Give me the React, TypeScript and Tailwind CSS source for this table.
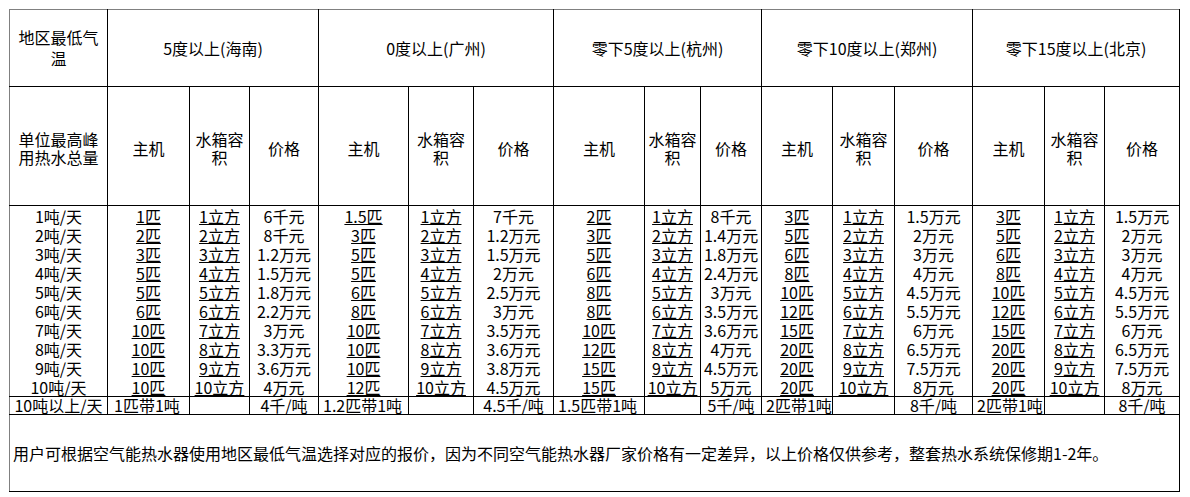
import React from "react";

const rows: string[][] = [
  ["1吨/天", "1匹", "1立方", "6千元", "1.5匹", "1立方", "7千元", "2匹", "1立方", "8千元", "3匹", "1立方", "1.5万元", "3匹", "1立方", "1.5万元"],
  ["2吨/天", "2匹", "2立方", "8千元", "3匹", "2立方", "1.2万元", "3匹", "2立方", "1.4万元", "5匹", "2立方", "2万元", "5匹", "2立方", "2万元"],
  ["3吨/天", "3匹", "3立方", "1.2万元", "5匹", "3立方", "1.5万元", "5匹", "3立方", "1.8万元", "6匹", "3立方", "3万元", "6匹", "3立方", "3万元"],
  ["4吨/天", "5匹", "4立方", "1.5万元", "5匹", "4立方", "2万元", "6匹", "4立方", "2.4万元", "8匹", "4立方", "4万元", "8匹", "4立方", "4万元"],
  ["5吨/天", "5匹", "5立方", "1.8万元", "6匹", "5立方", "2.5万元", "8匹", "5立方", "3万元", "10匹", "5立方", "4.5万元", "10匹", "5立方", "4.5万元"],
  ["6吨/天", "6匹", "6立方", "2.2万元", "8匹", "6立方", "3万元", "8匹", "6立方", "3.5万元", "12匹", "6立方", "5.5万元", "12匹", "6立方", "5.5万元"],
  ["7吨/天", "10匹", "7立方", "3万元", "10匹", "7立方", "3.5万元", "10匹", "7立方", "3.6万元", "15匹", "7立方", "6万元", "15匹", "7立方", "6万元"],
  ["8吨/天", "10匹", "8立方", "3.3万元", "10匹", "8立方", "3.6万元", "12匹", "8立方", "4万元", "20匹", "8立方", "6.5万元", "20匹", "8立方", "6.5万元"],
  ["9吨/天", "10匹", "9立方", "3.6万元", "10匹", "9立方", "3.8万元", "15匹", "9立方", "4.5万元", "20匹", "9立方", "7.5万元", "20匹", "9立方", "7.5万元"],
  ["10吨/天", "10匹", "10立方", "4万元", "12匹", "10立方", "4.5万元", "15匹", "10立方", "5万元", "20匹", "10立方", "8万元", "20匹", "10立方", "8万元"],
];

const lastRow: string[] = ["10吨以上/天", "1匹带1吨", "", "4千/吨", "1.2匹带1吨", "", "4.5千/吨", "1.5匹带1吨", "", "5千/吨", "2匹带1吨", "", "8千/吨", "2匹带1吨", "", "8千/吨"];

const regions = ["5度以上(海南)", "0度以上(广州)", "零下5度以上(杭州)", "零下10度以上(郑州)", "零下15度以上(北京)"];

const cell = "border border-black p-0 text-center align-middle whitespace-nowrap";

export default function App() {
  return (
    <div className="w-[1190px] h-[497px] bg-white pl-[9px] pt-[9px] font-['Noto_Sans_CJK_SC',sans-serif] text-[16px] text-black">
      <table className="table-fixed border-collapse w-[1171px]">
        <colgroup>
          <col className="w-[98px]" />
          <col className="w-[82px]" />
          <col className="w-[60px]" />
          <col className="w-[69px]" />
          <col className="w-[90px]" />
          <col className="w-[65px]" />
          <col className="w-[80px]" />
          <col className="w-[91px]" />
          <col className="w-[56px]" />
          <col className="w-[61px]" />
          <col className="w-[71px]" />
          <col className="w-[62px]" />
          <col className="w-[78px]" />
          <col className="w-[72px]" />
          <col className="w-[60px]" />
          <col className="w-[75px]" />
        </colgroup>
        <tbody>
          <tr className="h-[77px]">
            <td className={`${cell} border-t-[#808080] border-l-[#808080] leading-[21px]`}>
              地区最低气
              <br />温
            </td>
            {regions.map((r) => (
              <td key={r} colSpan={3} className={`${cell} border-t-[#808080] leading-[20px]`}>
                {r}
              </td>
            ))}
          </tr>
          <tr className="h-[119px]">
            <td className={`${cell} border-l-[#808080] leading-[18px] pt-[3px]`}>
              单位最高峰
              <br />
              用热水总量
            </td>
            {regions.map((r) => (
              <React.Fragment key={r}>
                <td className={`${cell} leading-[18px] pt-[3px]`}>主机</td>
                <td className={`${cell} leading-[18px] pt-[3px]`}>
                  水箱容
                  <br />积
                </td>
                <td className={`${cell} leading-[18px] pt-[3px]`}>价格</td>
              </React.Fragment>
            ))}
          </tr>
          {rows.map((row, i) => (
            <tr key={i} className="h-[19px]">
              {row.map((v, j) => (
                <td
                  key={j}
                  className={`${cell} leading-[18px] pt-[1px] ${j === 0 ? "border-l-[#808080]" : ""} ${i < rows.length - 1 ? "border-b-0" : ""} ${i > 0 ? "border-t-0" : ""}`}
                >
                  {j > 0 && j % 3 !== 0 ? (
                    <span className="underline underline-offset-[1px] decoration-1">{v}</span>
                  ) : (
                    v
                  )}
                </td>
              ))}
            </tr>
          ))}
          <tr className="h-[18px]">
            {lastRow.map((v, j) => (
              <td
                key={j}
                className={`${cell} leading-[17px] ${j === 0 ? "border-l-[#808080]" : ""} ${j === 1 ? "text-left pl-[6px]" : ""} ${j === 4 || j === 7 || j === 10 || j === 13 ? "text-left pl-[4px]" : ""}`}
              >
                {v}
              </td>
            ))}
          </tr>
          <tr className="h-[77px]">
            <td colSpan={16} className={`${cell} border-l-[#808080] text-left pl-[3px] leading-[20px]`}>
              用户可根据空气能热水器使用地区最低气温选择对应的报价，因为不同空气能热水器厂家价格有一定差异，以上价格仅供参考，整套热水系统保修期1-2年。
            </td>
          </tr>
        </tbody>
      </table>
    </div>
  );
}
